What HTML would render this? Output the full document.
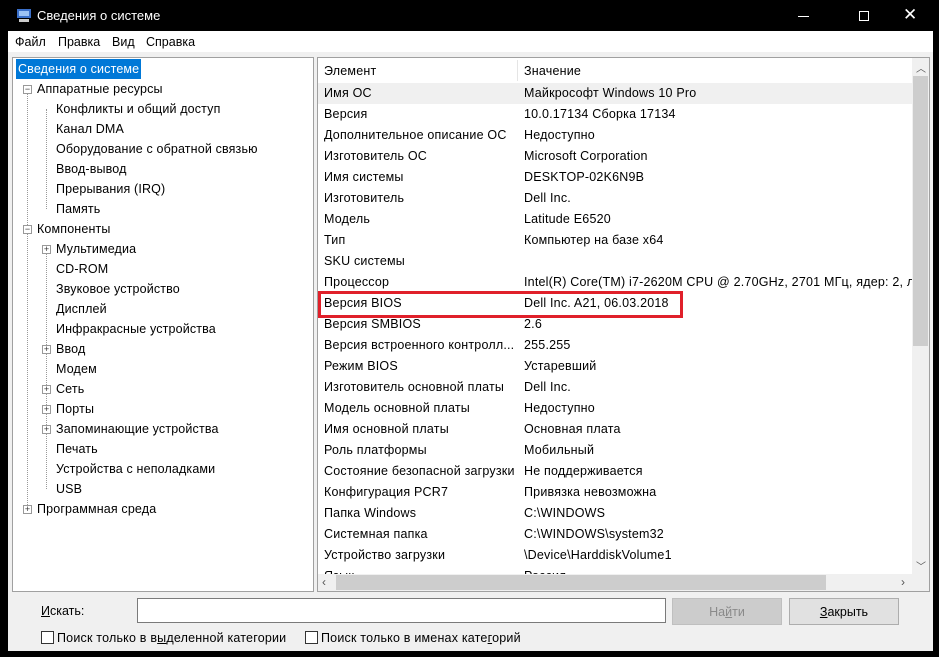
<!DOCTYPE html>
<html><head><meta charset="utf-8"><style>
*{margin:0;padding:0;box-sizing:border-box}
body{width:939px;height:657px;background:#000;position:relative;overflow:hidden;font-family:"Liberation Sans","Noto Sans CJK SC",sans-serif;font-size:12.5px;color:#000}
.a{position:absolute;white-space:nowrap}
#tb{left:8px;top:0;width:925px;height:31px;background:#000;color:#fff;font-size:13px}
#menu{left:8px;top:31px;width:925px;height:21px;background:#fff}
#body{left:8px;top:52px;width:925px;height:599px;background:#f0f0f0}
.panel{background:#fff;border:1px solid #a0a0a0}
.t{position:absolute;height:20px;line-height:20px;letter-spacing:0.15px}
.r{position:absolute;left:0;height:21px;line-height:21px;width:595px;letter-spacing:0.2px}
.r span{position:absolute}
.box{position:absolute;width:9px;height:9px;border:1px solid #999;background:#fff;font-size:9px;line-height:7px;text-align:center;color:#333}
.vd{position:absolute;border-left:1px dotted #999}
.cb{position:absolute;width:13px;height:13px;border:1px solid #333;background:#fff}
</style></head><body>
<div class="a" id="tb">
 <svg class="a" style="left:8px;top:7px" width="16" height="16"><rect x="1" y="2" width="14" height="9" fill="#3a6fc9"/><rect x="3" y="4" width="10" height="5" fill="#9cc3f5"/><rect x="3" y="12" width="10" height="3" fill="#ccc"/></svg>
 <span class="a" style="left:29px;top:8px">Сведения о системе</span>
 <div class="a" style="left:790px;top:16px;width:11px;height:1px;background:#fff"></div>
 <div class="a" style="left:851px;top:11px;width:10px;height:10px;border:1px solid #fff"></div>
 <span class="a" style="left:895px;top:5px;font-size:17px">✕</span>
</div>
<div class="a" id="menu">
 <span class="a" style="left:7px;top:4px">Файл</span>
 <span class="a" style="left:50px;top:4px">Правка</span>
 <span class="a" style="left:104px;top:4px">Вид</span>
 <span class="a" style="left:138px;top:4px">Справка</span>
</div>
<div class="a" id="body"></div>
<div class="a panel" style="left:12px;top:57px;width:302px;height:535px">
 <div class="t" style="left:3px;top:1px;background:#0078d7;color:#fff;padding:0 2px;height:20px;line-height:21px">Сведения о системе</div>
 <div style="position:absolute;left:0;top:1px;width:300px;height:500px">
 <div class="vd" style="left:14px;top:30px;height:420px"></div>
 <div class="vd" style="left:33px;top:50px;height:100px"></div>
 <div class="vd" style="left:33px;top:190px;height:240px"></div>
 <div class="box" style="left:10px;top:26px">−</div><div class="t" style="left:24px;top:20px">Аппаратные ресурсы</div>
 <div class="t" style="left:43px;top:40px">Конфликты и общий доступ</div>
 <div class="t" style="left:43px;top:60px">Канал DMA</div>
 <div class="t" style="left:43px;top:80px">Оборудование с обратной связью</div>
 <div class="t" style="left:43px;top:100px">Ввод-вывод</div>
 <div class="t" style="left:43px;top:120px">Прерывания (IRQ)</div>
 <div class="t" style="left:43px;top:140px">Память</div>
 <div class="box" style="left:10px;top:166px">−</div><div class="t" style="left:24px;top:160px">Компоненты</div>
 <div class="box" style="left:29px;top:186px">+</div><div class="t" style="left:43px;top:180px">Мультимедиа</div>
 <div class="t" style="left:43px;top:200px">CD-ROM</div>
 <div class="t" style="left:43px;top:220px">Звуковое устройство</div>
 <div class="t" style="left:43px;top:240px">Дисплей</div>
 <div class="t" style="left:43px;top:260px">Инфракрасные устройства</div>
 <div class="box" style="left:29px;top:286px">+</div><div class="t" style="left:43px;top:280px">Ввод</div>
 <div class="t" style="left:43px;top:300px">Модем</div>
 <div class="box" style="left:29px;top:326px">+</div><div class="t" style="left:43px;top:320px">Сеть</div>
 <div class="box" style="left:29px;top:346px">+</div><div class="t" style="left:43px;top:340px">Порты</div>
 <div class="box" style="left:29px;top:366px">+</div><div class="t" style="left:43px;top:360px">Запоминающие устройства</div>
 <div class="t" style="left:43px;top:380px">Печать</div>
 <div class="t" style="left:43px;top:400px">Устройства с неполадками</div>
 <div class="t" style="left:43px;top:420px">USB</div>
 <div class="box" style="left:10px;top:446px">+</div><div class="t" style="left:24px;top:440px">Программная среда</div>
 </div>
</div>
<div class="a panel" style="left:317px;top:57px;width:613px;height:535px;overflow:hidden">
 <div class="r" style="top:3px"><span style="left:6px">Элемент</span><span style="left:206px">Значение</span></div>
 <div class="a" style="left:199px;top:2px;width:1px;height:21px;background:#e5e5e5"></div>
 <div style="position:absolute;top:25px;left:0;width:595px">
 <div class="r" style="top:0;background:#f0f0f0"><span style="left:6px">Имя ОС</span><span style="left:206px">Майкрософт Windows 10 Pro</span></div>
 <div class="r" style="top:21px"><span style="left:6px">Версия</span><span style="left:206px">10.0.17134 Сборка 17134</span></div>
 <div class="r" style="top:42px"><span style="left:6px">Дополнительное описание ОС</span><span style="left:206px">Недоступно</span></div>
 <div class="r" style="top:63px"><span style="left:6px">Изготовитель ОС</span><span style="left:206px">Microsoft Corporation</span></div>
 <div class="r" style="top:84px"><span style="left:6px">Имя системы</span><span style="left:206px">DESKTOP-02K6N9B</span></div>
 <div class="r" style="top:105px"><span style="left:6px">Изготовитель</span><span style="left:206px">Dell Inc.</span></div>
 <div class="r" style="top:126px"><span style="left:6px">Модель</span><span style="left:206px">Latitude E6520</span></div>
 <div class="r" style="top:147px"><span style="left:6px">Тип</span><span style="left:206px">Компьютер на базе x64</span></div>
 <div class="r" style="top:168px"><span style="left:6px">SKU системы</span></div>
 <div class="r" style="top:189px"><span style="left:6px">Процессор</span><span style="left:206px">Intel(R) Core(TM) i7-2620M CPU @ 2.70GHz, 2701 МГц, ядер: 2, логических</span></div>
 <div class="r" style="top:210px"><span style="left:6px">Версия BIOS</span><span style="left:206px">Dell Inc. A21, 06.03.2018</span></div>
 <div class="r" style="top:231px"><span style="left:6px">Версия SMBIOS</span><span style="left:206px">2.6</span></div>
 <div class="r" style="top:252px"><span style="left:6px">Версия встроенного контролл...</span><span style="left:206px">255.255</span></div>
 <div class="r" style="top:273px"><span style="left:6px">Режим BIOS</span><span style="left:206px">Устаревший</span></div>
 <div class="r" style="top:294px"><span style="left:6px">Изготовитель основной платы</span><span style="left:206px">Dell Inc.</span></div>
 <div class="r" style="top:315px"><span style="left:6px">Модель основной платы</span><span style="left:206px">Недоступно</span></div>
 <div class="r" style="top:336px"><span style="left:6px">Имя основной платы</span><span style="left:206px">Основная плата</span></div>
 <div class="r" style="top:357px"><span style="left:6px">Роль платформы</span><span style="left:206px">Мобильный</span></div>
 <div class="r" style="top:378px"><span style="left:6px">Состояние безопасной загрузки</span><span style="left:206px">Не поддерживается</span></div>
 <div class="r" style="top:399px"><span style="left:6px">Конфигурация PCR7</span><span style="left:206px">Привязка невозможна</span></div>
 <div class="r" style="top:420px"><span style="left:6px">Папка Windows</span><span style="left:206px">C:\WINDOWS</span></div>
 <div class="r" style="top:441px"><span style="left:6px">Системная папка</span><span style="left:206px">C:\WINDOWS\system32</span></div>
 <div class="r" style="top:462px"><span style="left:6px">Устройство загрузки</span><span style="left:206px">\Device\HarddiskVolume1</span></div>
 <div class="r" style="top:483px"><span style="left:6px">Язык</span><span style="left:206px">Россия</span></div>
 </div>
 <div class="a" style="left:594px;top:0;width:17px;height:516px;background:#f0f0f0"></div>
 <div class="a" style="left:598px;top:2px;font-size:10px;color:#555">︿</div>
 <div class="a" style="left:595px;top:18px;width:15px;height:270px;background:#cdcdcd"></div>
 <div class="a" style="left:598px;top:500px;font-size:10px;color:#555">﹀</div>
 <div class="a" style="left:0;top:516px;width:611px;height:17px;background:#f0f0f0"></div>
 <div class="a" style="left:18px;top:517px;width:490px;height:15px;background:#cdcdcd"></div>
 <div class="a" style="left:4px;top:517px;font-size:12px;color:#555">‹</div>
 <div class="a" style="left:583px;top:517px;font-size:12px;color:#555">›</div>
</div>
<div class="a" style="left:318px;top:291px;width:365px;height:27px;border:3px solid #e0202a"></div>
<span class="a" style="left:41px;top:604px"><u>И</u>скать:</span>
<div class="a" style="left:137px;top:598px;width:529px;height:25px;background:#fff;border:1px solid #7a7a7a"></div>
<div class="a" style="left:672px;top:598px;width:110px;height:27px;background:#cccccc;border:1px solid #bfbfbf;color:#8a8a8a;text-align:center;line-height:26px">На<u>й</u>ти</div>
<div class="a" style="left:789px;top:598px;width:110px;height:27px;background:#e1e1e1;border:1px solid #adadad;text-align:center;line-height:26px"><u>З</u>акрыть</div>
<div class="cb" style="left:41px;top:631px"></div>
<span class="a" style="left:57px;top:631px;letter-spacing:0.2px">Поиск только в в<u>ы</u>деленной категории</span>
<div class="cb" style="left:305px;top:631px"></div>
<span class="a" style="left:321px;top:631px;letter-spacing:0.2px">Поиск только в именах кате<u>г</u>орий</span>
</body></html>
